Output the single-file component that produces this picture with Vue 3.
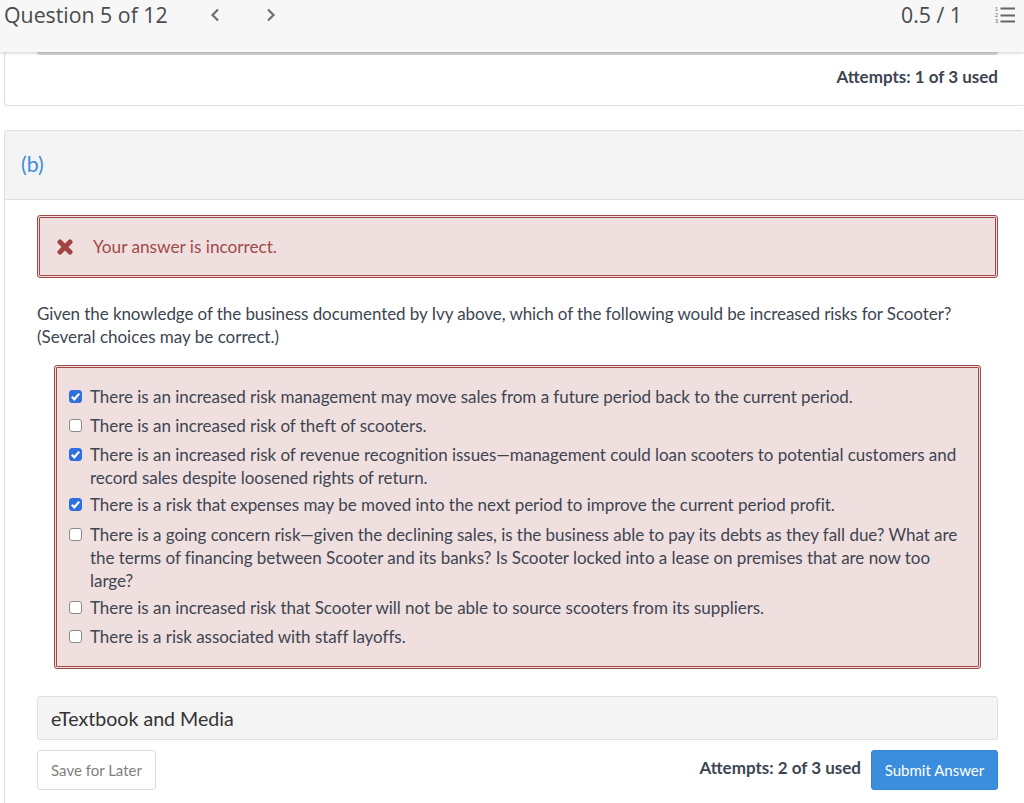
<script setup>
const choices = [
  { text: 'There is an increased risk management may move sales from a future period back to the current period.', on: true },
  { text: 'There is an increased risk of theft of scooters.', on: false },
  { text: 'There is an increased risk of revenue recognition issues—management could loan scooters to potential customers and record sales despite loosened rights of return.', on: true, gap: 'tight' },
  { text: 'There is a risk that expenses may be moved into the next period to improve the current period profit.', on: true, gap: 'loose' },
  { text: 'There is a going concern risk—given the declining sales, is the business able to pay its debts as they fall due? What are the terms of financing between Scooter and its banks? Is Scooter locked into a lease on premises that are now too large?', on: false, gap: 'tight' },
  { text: 'There is an increased risk that Scooter will not be able to source scooters from its suppliers.', on: false },
  { text: 'There is a risk associated with staff layoffs.', on: false },
]
</script>

<template>
  <div class="page">
    <header class="topbar">
      <div class="nav">
        <span class="qcount">Question 5 of 12</span>
        <svg class="chev first" width="10" height="14" viewBox="0 0 10 14"><path d="M8 1.500 L2.500 7 L8 12.500" fill="none" stroke="#707070" stroke-width="2.200"/></svg>
        <svg class="chev" width="10" height="14" viewBox="0 0 10 14"><path d="M2 1.500 L7.500 7 L2 12.500" fill="none" stroke="#707070" stroke-width="2.200"/></svg>
      </div>
      <div class="score">
        <span>0.5 / 1</span>
        <svg width="21" height="18" viewBox="0 0 21 18">
          <g fill="#666" font-family="Liberation Sans, sans-serif" font-size="5.500"><text x="0" y="5">1</text><text x="0" y="11">2</text><text x="0" y="17">3</text></g>
          <path d="M5.500 2.500 H20 M5.500 9.500 H20 M5.500 15.500 H20" stroke="#666" stroke-width="2"/>
        </svg>
      </div>
    </header>

    <section class="card prev">
      <div class="strip"></div>
      <div class="attempts top">Attempts: 1 of 3 used</div>
    </section>

    <section class="card partb">
      <div class="parthead">(b)</div>
      <div class="partbody">
        <div class="alert">
          <svg width="16" height="16" viewBox="0 0 16 16"><path d="M3 3 L13 13 M13 3 L3 13" stroke="#a04444" stroke-width="5" stroke-linecap="round"/></svg>
          <span>Your answer is incorrect.</span>
        </div>
        <p class="question"><span class="lead">Given the knowledge of the business documented by Ivy above, which of the following would be increased risks for Scooter?</span><br>(Several choices may be correct.)</p>
        <div class="choices">
          <div v-for="c in choices" :key="c.text" class="choice" :class="c.gap">
            <span class="box" :class="{ on: c.on }">
              <svg v-if="c.on" width="11" height="11" viewBox="0 0 11 11"><path d="M1.800 5.800 L4.300 8.300 L9.200 2.600" fill="none" stroke="#fff" stroke-width="2.200"/></svg>
            </span>
            <span class="label">{{ c.text }}</span>
          </div>
        </div>
        <div class="media">eTextbook and Media</div>
        <div class="actions">
          <button class="save">Save for Later</button>
          <div class="right">
            <span class="attempts">Attempts: 2 of 3 used</span>
            <button class="submit">Submit Answer</button>
          </div>
        </div>
      </div>
    </section>
  </div>
</template>

<style>
html, body { margin: 0; background: #fff; overflow: hidden; }
</style>

<style scoped>
.page { width: 1024px; height: 803px; overflow: hidden; font-family: Lato, sans-serif; color: #3d4551; background: #fff; }
.topbar { position: relative; z-index: 2; height: 52px; background: #f7f7f7; display: flex; justify-content: space-between; padding: 0 8px 0 4px; box-sizing: border-box; font-family: "Open Sans", sans-serif; color: #4a4a4a; font-size: 21.300px; box-shadow: 0 1px 3px rgba(0,0,0,.2); }
.nav, .score { display: flex; align-items: center; height: 29px; }
.chev { margin-left: 46px; }
.chev.first { margin-left: 42px; }
.score { gap: 33px; }
.card { margin-left: 4px; border: 1px solid #dedede; border-radius: 3px; box-sizing: border-box; }
.prev { height: 54px; border-top: 0; border-right: 0; padding: 0 26px 0 32px; }
.strip { height: 3px; background: #d4d4d4; border-radius: 0 0 3px 3px; }
.attempts { font-weight: 700; font-size: 17px; color: #3d4551; white-space: nowrap; }
.attempts.top { text-align: right; margin-top: 11px; line-height: 22px; }
.partb { margin-top: 24px; border-right: 0; height: 700px; }
.parthead { height: 69px; background: #f4f4f4; border-bottom: 1px solid #dedede; padding-left: 16px; box-sizing: border-box; color: #3b8ddd; font-size: 21.300px; line-height: 67px; }
.partbody { padding: 15px 26px 0 32px; }
.alert { height: 63px; box-sizing: border-box; border: 3px double #a04846; border-radius: 3px; background: #f0dfdf; color: #a04a4a; display: flex; align-items: center; font-size: 17.200px; padding-left: 17px; gap: 20px; }
.question { margin: 24px 0 0; font-size: 17px; line-height: 23px; color: #3d4551; }
.lead { letter-spacing: -.08px; }
.choices { margin: 17px 17px 0; height: 304px; box-sizing: border-box; border: 3px double #a04846; border-radius: 3px; background: #f0dfdf; padding: 17px 4px 0 12px; }
.choice { display: flex; gap: 8px; font-size: 17px; line-height: 23px; margin-bottom: 6px; letter-spacing: -.035px; }
.choice.tight { margin-bottom: 4px; }
.choice.loose { margin-bottom: 7px; }
.box { flex: none; width: 13px; height: 13px; box-sizing: border-box; margin-top: 5px; border: 1px solid #8a8a8a; border-radius: 3px; background: #fff; display: flex; }
.box.on { background: #2f6fe0; border-color: #2f6fe0; }
.media { margin-top: 27px; height: 44px; box-sizing: border-box; border: 1px solid #e0e0e0; border-radius: 3px; background: #f4f4f4; color: #333; font-size: 19.600px; line-height: 43px; padding-left: 13px; }
.actions { display: flex; justify-content: space-between; margin-top: 10px; }
.right { display: flex; align-items: center; gap: 9px; }
.right .attempts { position: relative; top: -3px; left: -1px; }
button { font-family: Lato, sans-serif; font-size: 15px; height: 40px; border-radius: 3px; box-sizing: border-box; }
.save { width: 119px; background: #fff; border: 1px solid #ddd; color: #808080; }
.submit { width: 127px; background: #3b8ddd; border: 1px solid #3683d0; color: #fff; }
</style>
